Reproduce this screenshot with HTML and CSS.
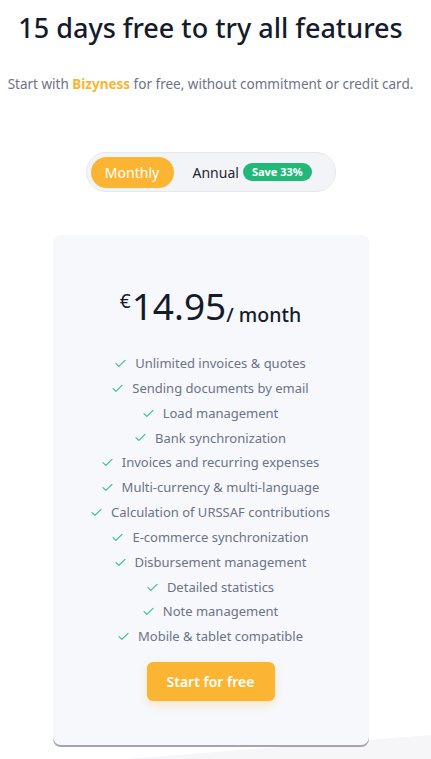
FILE: index.html
```html
<!DOCTYPE html>
<html lang="en">
<head>
<meta charset="utf-8">
<title>Pricing</title>
<link rel="stylesheet" href="styles.css">
</head>
<body>
<div class="bg-shape"></div>
<main class="page">
  <h1 class="title">15 days free to try all features</h1>
  <p class="subtitle">Start with <span class="brand">Bizyness</span> for free, without commitment or credit card.</p>

  <div class="toggle">
    <button class="toggle-btn active">Monthly</button>
    <button class="toggle-btn">Annual <span class="badge">Save 33%</span></button>
  </div>

  <section class="card">
    <div class="price">
      <span class="currency">€</span><span class="amount">14.95</span><span class="period">/ month</span>
    </div>
    <ul class="features">
      <li><svg class="check" viewBox="0 0 12 10"><path d="M1 5.2 4.2 8.2 11 1.5"/></svg>Unlimited invoices &amp; quotes</li>
      <li><svg class="check" viewBox="0 0 12 10"><path d="M1 5.2 4.2 8.2 11 1.5"/></svg>Sending documents by email</li>
      <li><svg class="check" viewBox="0 0 12 10"><path d="M1 5.2 4.2 8.2 11 1.5"/></svg>Load management</li>
      <li><svg class="check" viewBox="0 0 12 10"><path d="M1 5.2 4.2 8.2 11 1.5"/></svg>Bank synchronization</li>
      <li><svg class="check" viewBox="0 0 12 10"><path d="M1 5.2 4.2 8.2 11 1.5"/></svg>Invoices and recurring expenses</li>
      <li><svg class="check" viewBox="0 0 12 10"><path d="M1 5.2 4.2 8.2 11 1.5"/></svg>Multi-currency &amp; multi-language</li>
      <li><svg class="check" viewBox="0 0 12 10"><path d="M1 5.2 4.2 8.2 11 1.5"/></svg>Calculation of URSSAF contributions</li>
      <li><svg class="check" viewBox="0 0 12 10"><path d="M1 5.2 4.2 8.2 11 1.5"/></svg>E-commerce synchronization</li>
      <li><svg class="check" viewBox="0 0 12 10"><path d="M1 5.2 4.2 8.2 11 1.5"/></svg>Disbursement management</li>
      <li><svg class="check" viewBox="0 0 12 10"><path d="M1 5.2 4.2 8.2 11 1.5"/></svg>Detailed statistics</li>
      <li><svg class="check" viewBox="0 0 12 10"><path d="M1 5.2 4.2 8.2 11 1.5"/></svg>Note management</li>
      <li><svg class="check" viewBox="0 0 12 10"><path d="M1 5.2 4.2 8.2 11 1.5"/></svg>Mobile &amp; tablet compatible</li>
    </ul>
    <button class="cta">Start for free</button>
  </section>
</main>
</body>
</html>
```
FILE: styles.css
```css
* { box-sizing: border-box; }
html, body { margin: 0; padding: 0; }
body {
  background: #ffffff;
  font-family: "Noto Sans", "Open Sans", sans-serif;
  color: #111827;
  width: 431px;
  height: 759px;
  overflow: hidden;
  position: relative;
}
.bg-shape {
  position: absolute;
  left: 0; right: 0; bottom: 0;
  height: 26px;
  background: #f6f6f9;
  clip-path: polygon(29% 100%, 100% 8%, 100% 100%);
  z-index: 0;
}
.page {
  position: relative;
  z-index: 1;
  width: 421px;
  display: flex;
  flex-direction: column;
  align-items: center;
}
.title {
  margin: 10px 0 0;
  font-size: 27px;
  line-height: 36px;
  font-weight: 500;
  color: #151b2b;
  letter-spacing: 0;
  white-space: nowrap;
}
.subtitle {
  margin: 28px 0 0;
  font-size: 13.5px;
  line-height: 20px;
  color: #6b7385;
  white-space: nowrap;
}
.brand { color: #fbb533; font-weight: 700; }

.toggle {
  margin-top: 58px;
  width: 250px;
  height: 40px;
  display: flex;
  align-items: center;
  padding: 0 4px;
  border-radius: 20px;
  background: #f3f4f7;
  border: 1px solid #e7e8ec;
  gap: 19px;
}
.toggle-btn {
  border: 0;
  background: transparent;
  font-family: inherit;
  font-size: 14px;
  color: #1f2433;
  padding: 0;
  display: flex;
  align-items: center;
  gap: 4px;
  cursor: pointer;
}
.toggle-btn.active {
  background: #fbb533;
  color: #ffffff;
  width: 83px;
  height: 31px;
  border-radius: 16px;
  justify-content: center;
}
.badge {
  background: #22b87a;
  color: #ffffff;
  font-size: 11px;
  font-weight: 700;
  border-radius: 10px;
  padding: 1px 9px;
  line-height: 16px;
}

.card {
  margin-top: 43px;
  width: 316px;
  background: #f7f8fc;
  border-radius: 8px;
  box-shadow: 0 2px 0 #a5a6ad, 0 0 1px rgba(0,0,0,0.04);
  display: flex;
  flex-direction: column;
  align-items: center;
  padding: 50px 0 44px;
}
.price {
  display: flex;
  align-items: flex-start;
  color: #151b2b;
  height: 41px;
}
.currency { font-size: 19px; line-height: 26px; margin-top: 3px; margin-right: 1px; }
.amount { font-size: 37px; line-height: 41px; }
.period { font-size: 19.5px; line-height: 26px; margin-top: 17px; font-weight: 500; }

.features {
  list-style: none;
  margin: 25px 0 0;
  padding: 0;
  display: flex;
  flex-direction: column;
  align-items: center;
}
.features li {
  font-size: 13px;
  line-height: 24.85px;
  color: #6b7385;
  display: flex;
  align-items: center;
}
.check {
  width: 11px;
  height: 9px;
  margin-right: 9px;
  fill: none;
  stroke: #36c08c;
  stroke-width: 1.3;
  stroke-linecap: round;
  stroke-linejoin: round;
}
.cta {
  margin-top: 13px;
  width: 128px;
  height: 39px;
  border: 0;
  border-radius: 6px;
  background: #fbb533;
  color: #ffffff;
  font-family: inherit;
  font-size: 14px;
  font-weight: 600;
  box-shadow: 0 4px 8px rgba(251, 181, 51, 0.25);
  cursor: pointer;
}
```
